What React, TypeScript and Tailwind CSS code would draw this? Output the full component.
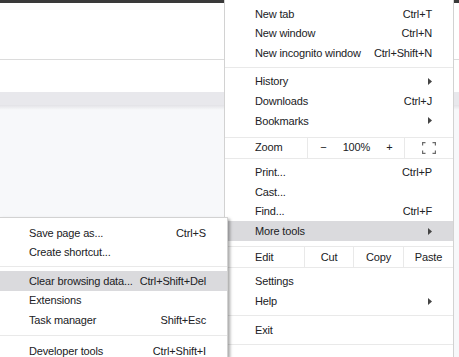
import React from "react";

type Item = { label: string; shortcut?: string; arrow?: boolean; active?: boolean };

function Arrow() {
  return (
    <svg width="4" height="7" viewBox="0 0 4 7" className="shrink-0">
      <path d="M0 0 L4 3.5 L0 7 Z" fill="#444" />
    </svg>
  );
}

function Row({ item, padL, padR }: { item: Item; padL: string; padR: string }) {
  return (
    <div
      className={`flex h-[19.6px] items-center justify-between whitespace-nowrap ${padL} ${padR} ${
        item.active ? "bg-[#dadadd]" : ""
      }`}
    >
      <span>{item.label}</span>
      {item.arrow ? <Arrow /> : <span>{item.shortcut}</span>}
    </div>
  );
}

function Sep({ y = "my-[4px]" }: { y?: string }) {
  return <div className={`${y} h-px bg-[#e9e9e9]`} />;
}

function FullscreenIcon() {
  return (
    <svg width="14" height="12" viewBox="0 0 14 12" fill="none" stroke="#6b6b6b" strokeWidth="1.2">
      <path d="M0.6 3.5 V0.6 H3.5 M10.5 0.6 H13.4 V3.5 M13.4 8.5 V11.4 H10.5 M3.5 11.4 H0.6 V8.5" />
    </svg>
  );
}

function MainMenu() {
  const main = (items: Item[]) =>
    items.map((it) => <Row key={it.label} item={it} padL="pl-[30px]" padR="pr-[21px]" />);
  return (
    <div className="absolute left-[224px] top-0 w-[230px] h-[357px] border-x border-[#d2d2d2] bg-white pt-[4px] text-[11px] tracking-[-0.15px] text-[#202124]">
      {main([
        { label: "New tab", shortcut: "Ctrl+T" },
        { label: "New window", shortcut: "Ctrl+N" },
        { label: "New incognito window", shortcut: "Ctrl+Shift+N" },
      ])}
      <Sep />
      {main([
        { label: "History", arrow: true },
        { label: "Downloads", shortcut: "Ctrl+J" },
        { label: "Bookmarks", arrow: true },
      ])}
      <div className="mt-[6px] flex h-[22px] items-center whitespace-nowrap border-y border-[#e9e9e9]">
        <span className="w-[84px] pl-[30px]">Zoom</span>
        <div className="flex h-full flex-1 items-center border-l border-[#e9e9e9]">
          <span className="w-[30px] text-center">−</span>
          <span className="w-[36px] text-center">100%</span>
          <span className="w-[30px] text-center">+</span>
        </div>
        <div className="flex h-full w-[50px] items-center justify-center border-l border-[#e9e9e9]">
          <FullscreenIcon />
        </div>
      </div>
      <div className="h-[4px]" />
      {main([
        { label: "Print...", shortcut: "Ctrl+P" },
        { label: "Cast..." },
        { label: "Find...", shortcut: "Ctrl+F" },
        { label: "More tools", arrow: true, active: true },
      ])}
      <div className="mt-[5px] flex h-[22px] items-center whitespace-nowrap border-y border-[#e9e9e9]">
        <span className="w-[79px] pl-[30px]">Edit</span>
        <span className="flex h-full w-[49px] items-center justify-center border-l border-[#e9e9e9]">Cut</span>
        <span className="flex h-full w-[50px] items-center justify-center border-l border-[#e9e9e9]">Copy</span>
        <span className="flex h-full flex-1 items-center justify-center border-l border-[#e9e9e9]">Paste</span>
      </div>
      <div className="h-[4px]" />
      {main([
        { label: "Settings" },
        { label: "Help", arrow: true },
      ])}
      <Sep />
      {main([{ label: "Exit" }])}
      <Sep />
    </div>
  );
}

function SubMenu() {
  const sub = (items: Item[]) =>
    items.map((it) => <Row key={it.label} item={it} padL="pl-[29px]" padR="pr-[21px]" />);
  return (
    <div className="absolute left-0 top-[217px] w-[228px] h-[140px] border-r border-t border-[#d2d2d2] bg-white pt-[5px] text-[11px] tracking-[-0.15px] text-[#202124] shadow-[2px_2px_3px_rgba(0,0,0,0.35)]">
      {sub([
        { label: "Save page as...", shortcut: "Ctrl+S" },
        { label: "Create shortcut..." },
      ])}
      <Sep />
      {sub([
        { label: "Clear browsing data...", shortcut: "Ctrl+Shift+Del", active: true },
        { label: "Extensions" },
        { label: "Task manager", shortcut: "Shift+Esc" },
      ])}
      <Sep y="my-[5px]" />
      {sub([{ label: "Developer tools", shortcut: "Ctrl+Shift+I" }])}
    </div>
  );
}

export default function App() {
  return (
    <div
      className="relative h-[357px] w-[459px] overflow-hidden bg-white"
      style={{ fontFamily: '"Liberation Sans", Arial, sans-serif' }}
    >
      <div className="h-[3px] bg-[#3a3a3a]" />
      <div className="h-[56px] bg-white" />
      <div className="h-px bg-[#dcdcdc]" />
      <div className="h-[32px] bg-white" />
      <div className="h-[13px] bg-[#e8e8ec]" />
      <div className="h-[5px] bg-gradient-to-b from-[#e2e2e6] to-[#f7f8fa]" />
      <div className="h-[247px] bg-[#f7f8fa]" />
      <MainMenu />
      <SubMenu />
    </div>
  );
}
